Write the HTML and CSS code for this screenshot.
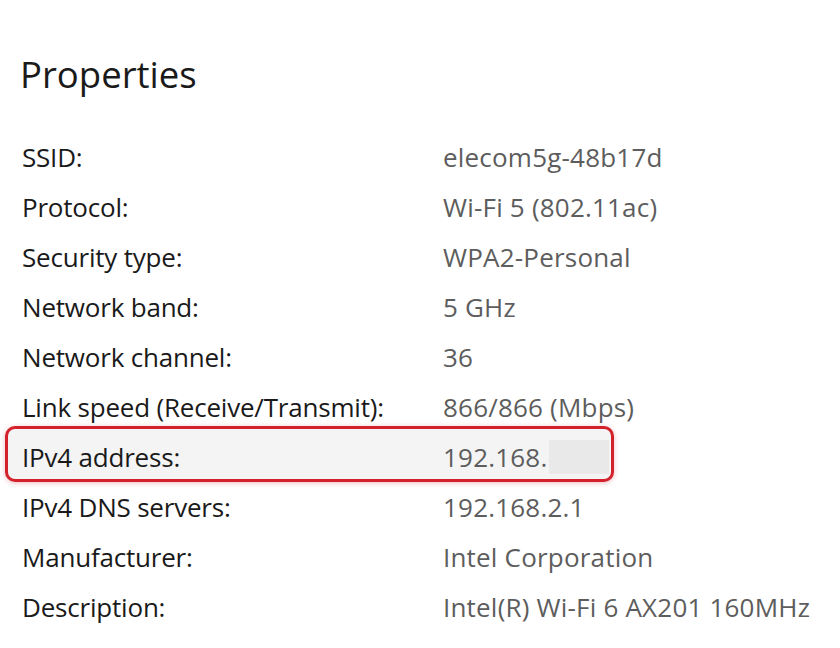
FILE: index.html
```html
<!DOCTYPE html>
<html>
<head>
<meta charset="utf-8">
<link rel="stylesheet" href="styles.css">
</head>
<body>
<div class="page">
  <h1 class="title">Properties</h1>
  <div class="props">
    <div class="row"><span class="label">SSID:</span><span class="value">elecom5g-48b17d</span></div>
    <div class="row"><span class="label">Protocol:</span><span class="value">Wi-Fi 5 (802.11ac)</span></div>
    <div class="row"><span class="label">Security type:</span><span class="value">WPA2-Personal</span></div>
    <div class="row"><span class="label">Network band:</span><span class="value">5 GHz</span></div>
    <div class="row"><span class="label">Network channel:</span><span class="value">36</span></div>
    <div class="row"><span class="label">Link speed (Receive/Transmit):</span><span class="value">866/866 (Mbps)</span></div>
    <div class="row highlight"><span class="label">IPv4 address:</span><span class="value">192.168.<span class="blur"></span></span></div>
    <div class="row"><span class="label">IPv4 DNS servers:</span><span class="value">192.168.2.1</span></div>
    <div class="row"><span class="label">Manufacturer:</span><span class="value">Intel Corporation</span></div>
    <div class="row"><span class="label">Description:</span><span class="value">Intel(R) Wi-Fi 6 AX201 160MHz</span></div>
  </div>
</div>
</body>
</html>
```
FILE: styles.css
```css
html, body {
  margin: 0;
  padding: 0;
  background: #ffffff;
}
body {
  font-family: "Open Sans", "Noto Sans", sans-serif;
  color: #1b1b1b;
}
.page {
  padding: 50px 0 0 22px;
}
.title {
  margin: 0;
  font-size: 36.5px;
  font-weight: 400;
  line-height: 48px;
  color: #1a1a1a;
  margin-left: -2px;
}
.props {
  margin-top: 34px;
  display: flex;
  flex-direction: column;
}
.row {
  display: grid;
  grid-template-columns: 421px 1fr;
  height: 50px;
  align-items: center;
  font-size: 26px;
  position: relative;
  white-space: nowrap;
}
.label {
  color: #1a1a1a;
  letter-spacing: -0.2px;
}
.value {
  color: #5d5d5d;
  display: flex;
  align-items: center;
  letter-spacing: 0.2px;
}
.highlight::before {
  content: "";
  position: absolute;
  left: -17px;
  top: -6px;
  width: 609px;
  height: 56px;
  box-sizing: border-box;
  border: 3px solid #d3222c;
  border-radius: 10px;
  background: #f4f4f4;
  box-shadow: 0 1px 5px rgba(200,30,40,0.3);
  z-index: -1;
}
.highlight {
  z-index: 0;
}
.blur {
  display: inline-block;
  width: 60px;
  height: 34px;
  background: #e9e9e9;
  margin-left: 2px;
}
```
